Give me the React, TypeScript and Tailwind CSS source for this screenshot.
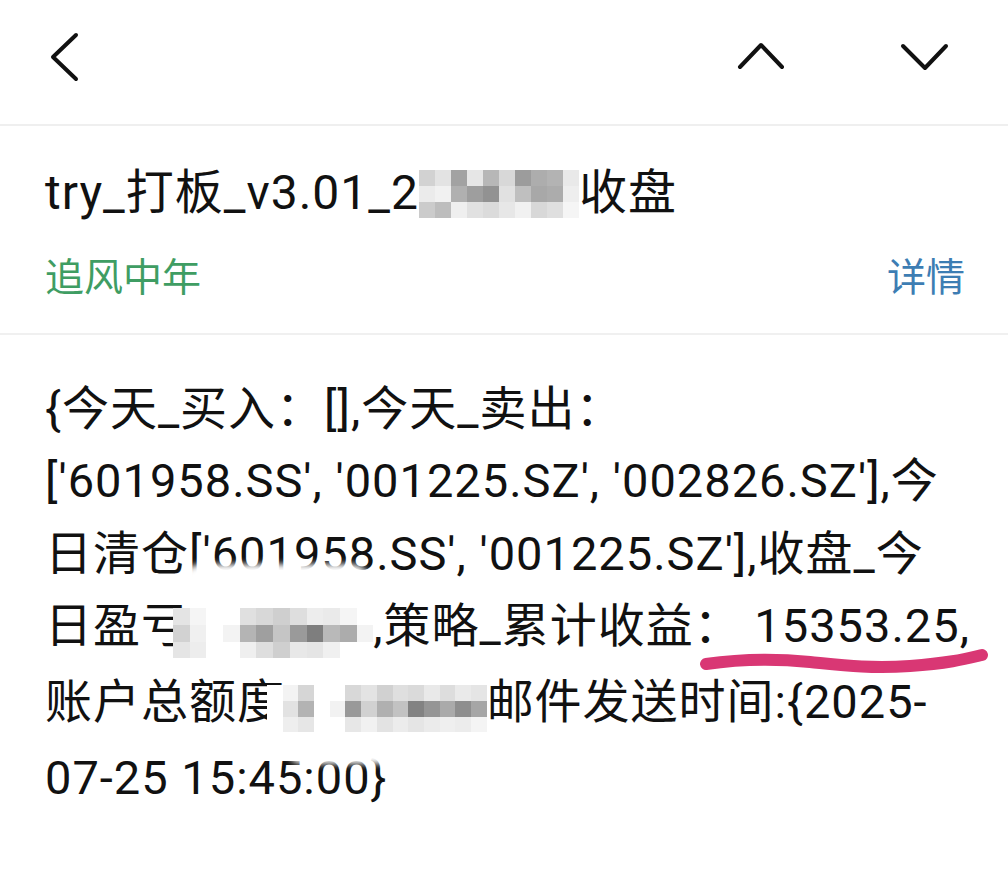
import React from 'react';

const FONT = { fontFamily: 'Roboto, "Noto Sans CJK SC", sans-serif' };

// pixelated blur blocks (hand-picked grays)
const TITLE_SHADES = [
  ['#d2d2d2', '#e3e3e3', '#a2a2a2', '#e6e6e6', '#b7b7b7', '#d8d8d8', '#9c9c9c', '#adadad', '#b3b3b3', '#e9e9e9'],
  ['#ebebeb', '#f1f1f1', '#b0b0b0', '#9e9e9e', '#929292', '#e1e1e1', '#bfbfbf', '#a8a8a8', '#acacac', '#eeeeee'],
  ['#cbcbcb', '#bdbdbd', '#efefef', '#e1e1e1', '#dbdbdb', '#e7e7e7', '#f1f1f1', '#d8d8d8', '#dfdfdf', '#f5f5f5'],
];

const PNL_SHADES = [
  ['#e4e4e4', '#f5f5f5', '#ffffff', '#ffffff', '#e0e0e0', '#d8d8d8', '#cfcfcf', '#dedede', '#ededed', '#eaeaea', '#f5f5f5', '#ffffff'],
  ['#d2d2d2', '#f0f0f0', '#ffffff', '#f3f3f3', '#b4b4b4', '#9f9f9f', '#c5c5c5', '#9a9a9a', '#7e7e7e', '#b9b9b9', '#acacac', '#f3f3f3'],
  ['#e5e5e5', '#ededed', '#ffffff', '#ffffff', '#efefef', '#dedede', '#cfcfcf', '#e8e8e8', '#e5e5e5', '#f0f0f0', '#ffffff', '#ffffff'],
];

const TOTAL_SHADES = [
  ['#ffffff', '#f3f3f3', '#d6d6d6', '#ffffff', '#ffffff', '#d8d8d8', '#e3e3e3', '#d1d1d1', '#dfdfdf', '#dadada', '#e9e9e9', '#dddddd', '#eaeaea', '#e5e5e5'],
  ['#ffffff', '#e2e2e2', '#b3b3b3', '#ffffff', '#f2f2f2', '#999999', '#d1d1d1', '#b0b0b0', '#c2c2c2', '#828282', '#959595', '#aaaaaa', '#8e8e8e', '#a6a6a6'],
  ['#ffffff', '#eeeeee', '#e6e6e6', '#ffffff', '#ffffff', '#e7e7e7', '#f1f1f1', '#e3e3e3', '#ececec', '#e5e5e5', '#ebebeb', '#efefef', '#ececec', '#f4f4f4'],
];

function Mosaic({ shades, cell, className = '' }: { shades: string[][]; cell: number; className?: string }) {
  return (
    <span className={`relative inline-flex flex-col align-middle blur-[0.6px] ${className}`}>
      {shades.map((row, r) => (
        <span key={r} className="flex">
          {row.map((c, i) => (
            <span key={i} className="block" style={{ width: cell, height: cell, background: c }} />
          ))}
        </span>
      ))}
    </span>
  );
}

export default function App() {
  return (
    <div className="w-[1008px] h-[883px] bg-white text-[#111] overflow-hidden" style={FONT}>
      {/* toolbar */}
      <header className="h-[126px] flex items-start border-b-2 border-[#efefef]">
        <svg viewBox="0 0 40 56" className="w-[40px] h-[56px] ml-[43px] mt-[29px]" fill="none" stroke="#111" strokeWidth={4} strokeLinecap="round" strokeLinejoin="round">
          <polyline points="33,6 10,28 33,50" />
        </svg>
        <div className="flex-1" />
        <svg viewBox="0 0 52 32" className="w-[52px] h-[32px] mt-[40px] mr-[111px]" fill="none" stroke="#111" strokeWidth={4} strokeLinecap="round" strokeLinejoin="round">
          <polyline points="5,27 26,5 47,27" />
        </svg>
        <svg viewBox="0 0 52 32" className="w-[52px] h-[32px] mt-[41px] mr-[58px]" fill="none" stroke="#111" strokeWidth={4} strokeLinecap="round" strokeLinejoin="round">
          <polyline points="5,5 27,27 48,5" />
        </svg>
      </header>

      {/* subject */}
      <section className="px-[45px] pt-[39px] pb-[31px] border-b-2 border-[#f0f0f0]">
        <h1 className="text-[48px] leading-[56px] tracking-[1px] whitespace-nowrap">
          try_打板_v3.01_2
          <Mosaic shades={TITLE_SHADES} cell={16} className="-mt-[4px]" />
          收盘
        </h1>
        <div className="flex justify-between items-center mt-[33px] text-[39px] leading-[48px]">
          <span className="text-[#3f9d63]">追风中年</span>
          <span className="text-[#3d7db3] -mr-[2px]">详情</span>
        </div>
      </section>

      {/* body */}
      <main className="px-[45px] pt-[38px] text-[47px] leading-[72.4px] tracking-[1px] whitespace-nowrap">
        <div>{'{今天_买入：[],今天_卖出：'}</div>
        <div>['601958.SS', '001225.SZ', '002826.SZ'],今</div>
        <div>日清仓['601958.SS', '001225.SZ'],收盘_今</div>
        <div className="relative">
          日盈亏
          <span className="relative inline-block align-middle -ml-[16px]">
            <span className="absolute -top-[30px] left-[8px] w-[190px] h-[40px] rounded-full bg-white blur-[3px]" />
            <Mosaic shades={PNL_SHADES} cell={16.7} />
          </span>
          ,策略_累计收益： 15353.25,
          <svg className="absolute left-[655px] top-[54px] w-[300px] h-[40px] overflow-visible" viewBox="0 0 300 40" fill="none">
            <path d="M6 20 C 40 15, 80 15, 110 18 S 170 25, 210 22 S 265 15, 282 11" stroke="#d93774" strokeWidth={12} strokeLinecap="round" />
          </svg>
        </div>
        <div>
          账户总额度
          <span className="relative inline-block align-middle -ml-[18px]">
            <span className="absolute -bottom-[22px] left-[20px] w-[160px] h-[30px] rounded-full bg-white blur-[3px]" />
            <Mosaic shades={TOTAL_SHADES} cell={15.7} />
          </span>
          邮件发送时间:{'{'}2025-
        </div>
        <div>07-25 15:45:00{'}'}</div>
      </main>
    </div>
  );
}
